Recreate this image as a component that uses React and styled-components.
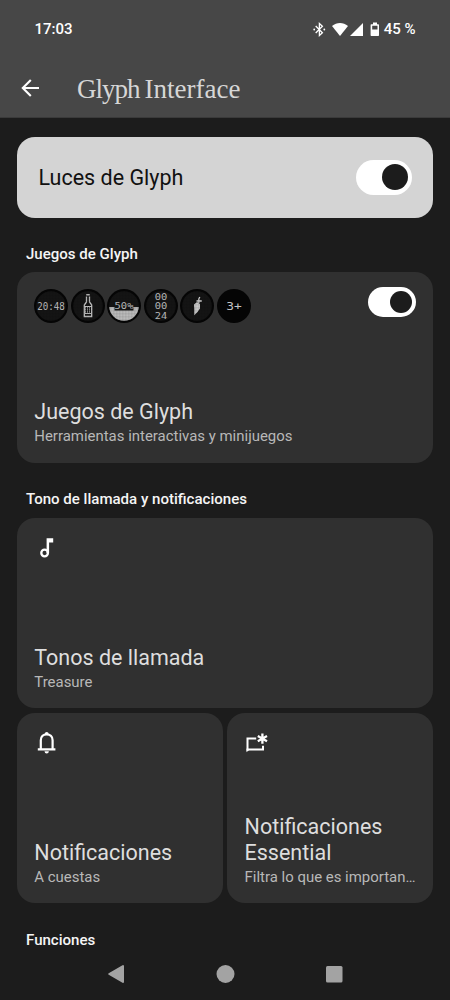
import React, { useState } from 'react'
import styled, { createGlobalStyle } from 'styled-components'

const GlobalStyle = createGlobalStyle`
    * {
        box-sizing: border-box;
    }
    body {
        margin: 0;
        background: #1c1c1c;
        font-family: Roboto, "Liberation Sans", sans-serif;
    }
    button {
        padding: 0;
        border: none;
        background: transparent;
        cursor: pointer;
    }
    svg {
        display: block;
    }
`

const Screen = styled.div`
    display: flex;
    flex-direction: column;
    width: 450px;
    height: 1000px;
    overflow: hidden;
    background: #1c1c1c;
`

const Header = styled.header`
    height: 118px;
    flex-shrink: 0;
    background: #474747;
    border-bottom: 1px solid #3a3a3a;
`

const StatusBar = styled.div`
    display: flex;
    justify-content: space-between;
    align-items: center;
    height: 58px;
    padding: 0 34.5px;
    color: #fff;
    font-size: 15px;
    font-weight: 500;
`

const StatusIcons = styled.div`
    display: flex;
    align-items: center;
`

const TitleBar = styled.div`
    display: flex;
    align-items: center;
    height: 60px;
    padding-left: 21px;
`

const Title = styled.h1`
    display: flex;
    gap: 5px;
    margin: 2px 0 0 38px;
    color: #d6d6d6;
    font-family: "Liberation Serif", serif;
    font-size: 27px;
    font-weight: 400;
    line-height: 32px;
`

const TitleWord = styled.span`
    letter-spacing: ${props => props.$spacing}px;
`

const Content = styled.main`
    flex: 1;
    padding: 19px 17px 0;
`

const MainSwitch = styled.section`
    display: flex;
    justify-content: space-between;
    align-items: center;
    height: 80.5px;
    padding: 0 21.5px 0 21.5px;
    border-radius: 18px;
    background: #d4d4d4;
    color: #111;
    font-size: 21.5px;
`

const SectionTitle = styled.h2`
    height: ${props => props.$height || 54.5}px;
    margin: 0;
    padding: 27.5px 0 0 9px;
    color: #f5f5f5;
    font-size: 15.05px;
    font-weight: 500;
    line-height: 19px;
`

const Grid = styled.div`
    display: grid;
    grid-template-columns: 1fr 1fr;
    gap: 4.5px;
`

const CardBox = styled.section`
    display: flex;
    flex-direction: column;
    justify-content: space-between;
    grid-column: ${props => (props.$wide ? 'span 2' : 'auto')};
    height: 190.5px;
    min-width: 0;
    padding: 15px 17px 17.5px 17.3px;
    border-radius: 18px;
    background: #303030;
`

const CardTop = styled.div`
    display: flex;
    justify-content: space-between;
    align-items: flex-start;
`

const CardTitle = styled.div`
    color: #dedede;
    font-size: 21.5px;
    line-height: 25.4px;
`

const CardText = styled.div`
    margin-top: 2.5px;
    color: #b8b8b8;
    font-size: 14.95px;
    line-height: 18px;
    white-space: nowrap;
`

const Track = styled.button`
    display: flex;
    align-items: center;
    justify-content: ${props => (props.$on ? 'flex-end' : 'flex-start')};
    width: ${props => (props.$small ? 48 : 56)}px;
    height: ${props => (props.$small ? 30 : 35)}px;
    padding: 0 4px;
    border-radius: 18px;
    background: ${props => (props.$on ? '#fff' : '#777')};
`

const Thumb = styled.span`
    width: ${props => (props.$small ? 22 : 26)}px;
    height: ${props => (props.$small ? 22 : 26)}px;
    border-radius: 50%;
    background: #1c1c1c;
`

const Toys = styled.div`
    display: flex;
    gap: 2.5px;
    padding-top: 2px;
    margin-left: -0.3px;
`

const NavBar = styled.nav`
    display: flex;
    justify-content: space-between;
    align-items: center;
    height: 52px;
    padding: 0 107px 0 106.5px;
`

const Toggle = ({ small, label }) => {
    const [on, setOn] = useState(true)

    return (
        <Track type="button" role="switch" aria-checked={on} aria-label={label} $small={small} $on={on} onClick={() => setOn(!on)}>
            <Thumb $small={small} />
        </Track>
    )
}

// Round dot-matrix preview, the mesh goes over the content
const Toy = ({ children, plain }) => (
    <svg width="34" height="34" viewBox="0 0 34 34">
        <defs>
            <pattern id="mesh" width="1.5" height="1.5" patternUnits="userSpaceOnUse">
                <path d="M0 0H1.5M0 0V1.5" stroke="#000" strokeWidth="0.4" />
            </pattern>
            <clipPath id="disc">
                <circle cx="17" cy="17" r="14.8" />
            </clipPath>
        </defs>
        <circle cx="17" cy="17" r="17" fill="#050505" />
        {!plain && <circle cx="17" cy="17" r="14.8" fill="#151515" />}
        {children}
        {!plain && <circle cx="17" cy="17" r="14.8" fill="url(#mesh)" opacity="0.35" />}
    </svg>
)

const ToyText = ({ y, width, size = 10, color = '#c4c4c4', children }) => (
    <text x={17 - width / 2} y={y} textLength={width} lengthAdjust="spacingAndGlyphs" fontFamily="DejaVu Sans Mono, monospace" fontSize={size} fill={color}>
        {children}
    </text>
)

const GlyphToys = () => (
    <Toys>
        <Toy>
            <ToyText y={20.5} width={27.5} size={10.5}>20:48</ToyText>
        </Toy>
        <Toy>
            <path d="M15.2 5.8H18.8" stroke="#c8c8c8" strokeWidth="1.4" />
            <path d="M15.5 7.5V13L13.3 16V27.5H20.7V16L18.5 13V7.5" fill="none" stroke="#c8c8c8" strokeWidth="1.3" />
            <path d="M13.5 17.5H20.5M13.5 24.5H20.5" stroke="#c8c8c8" strokeWidth="1.2" />
            <path d="M14 18.8H20M14 20.8H20M14 22.8H20" stroke="#bbb" strokeWidth="1.3" strokeDasharray="1 1" />
        </Toy>
        <Toy>
            <g clipPath="url(#disc)">
                <path d="M1 18H7.5V21.5H26.5V18H33V34H1Z" fill="#c0c0c0" />
            </g>
            <ToyText y={20.4} width={19} size={9}>50%</ToyText>
        </Toy>
        <Toy>
            <ToyText y={10.5} width={12.5} size={9.5}>00</ToyText>
            <ToyText y={19.8} width={12.5} size={9.5}>00</ToyText>
            <ToyText y={30} width={12.5} size={9.5}>24</ToyText>
        </Toy>
        <Toy>
            <path d="M14 15.5L17 13L20 15V19.5L17.5 23L14.3 26.2V20Z" fill="#d0d0d0" />
            <path d="M19.8 8L18.8 10V14M16.5 12H21.8" fill="none" stroke="#d8d8d8" strokeWidth="1.3" />
        </Toy>
        <Toy plain>
            <ToyText y={20.7} width={15.5} size={11}>3+</ToyText>
        </Toy>
    </Toys>
)

const BackIcon = () => (
    <svg width="18" height="18" viewBox="0 0 18 18" fill="none" stroke="#fff" strokeWidth="2.1">
        <path d="M18 9H2M9.8 1L1.8 9L9.8 17" />
    </svg>
)

const BluetoothIcon = () => (
    <svg width="13" height="15" viewBox="0 0 13 15" fill="none" stroke="#fff" strokeWidth="1.3">
        <path d="M2.7 4L9.4 10.8L6.4 13.5V1.5L9.4 4.2L2.7 11" />
        <circle cx="1.2" cy="7.5" r="0.9" fill="#fff" stroke="none" />
        <circle cx="11.3" cy="7.5" r="0.9" fill="#fff" stroke="none" />
    </svg>
)

const SignalIcons = () => (
    <svg width="48" height="15" viewBox="0 0 48 15" fill="#fff">
        <path d="M0 4.1C4.8 0.1 11.2 0.1 16 4.1L8 14Z" />
        <path d="M31 1V14H18Z" />
        <path d="M41 0.6H45V2.2H46.3Q47 2.2 47 2.9V13.3Q47 14 46.3 14H39.3Q38.6 14 38.6 13.3V2.9Q38.6 2.2 39.3 2.2H41ZM40.2 3.8V7.6H45.5V3.8Z" fillRule="evenodd" />
    </svg>
)

const NoteIcon = () => (
    <svg width="25" height="30" viewBox="0 0 25 30">
        <circle cx="10.6" cy="20" r="3.3" fill="none" stroke="#fff" strokeWidth="2.3" />
        <path d="M12.6 5.3H19.2V9.4H15.1V20H12.6Z" fill="#fff" />
    </svg>
)

const BellIcon = () => (
    <svg width="26" height="30" viewBox="0 0 26 30">
        <path d="M3.8 21.3H21.4M6.8 21V12.2C6.8 8.6 9.4 6.3 12.7 6.3S18.6 8.6 18.6 12.2V21" fill="none" stroke="#fff" strokeWidth="2.2" />
        <path d="M10.8 6.5V5.8Q10.8 4.1 12.7 4.1T14.6 5.8V6.5ZM10.5 23.3H14.9Q14.7 25.5 12.7 25.5T10.5 23.3Z" fill="#fff" />
    </svg>
)

const EssentialIcon = () => (
    <svg width="26" height="30" viewBox="0 0 26 30" fill="none" stroke="#fff">
        <path d="M11.2 10.4H2.5V22.8M1.5 21.4H18V17.8" strokeWidth="2" />
        <path d="M1.5 20.5V24.3L4.5 21.5Z" fill="#fff" stroke="none" />
        <path d="M17.4 5.6V15.8M12.8 8.1L22 13.3M22 8.1L12.8 13.3" strokeWidth="2.3" />
    </svg>
)

const Card = ({ top, title, text, wide }) => (
    <CardBox $wide={wide}>
        <CardTop>{top}</CardTop>
        <div>
            <CardTitle>{title}</CardTitle>
            <CardText>{text}</CardText>
        </div>
    </CardBox>
)

const App = () => (
    <Screen>
        <GlobalStyle />
        <Header>
            <StatusBar>
                <span>17:03</span>
                <StatusIcons>
                    <BluetoothIcon />
                    <svg width="6" height="1" />
                    <SignalIcons />
                    <span>&nbsp;45 %</span>
                </StatusIcons>
            </StatusBar>
            <TitleBar>
                <button type="button" aria-label="Atrás"><BackIcon /></button>
                <Title>
                    <TitleWord $spacing={-1}>Glyph</TitleWord>
                    <TitleWord $spacing={0}>Interface</TitleWord>
                </Title>
            </TitleBar>
        </Header>
        <Content>
            <MainSwitch>
                <span>Luces de Glyph</span>
                <Toggle label="Luces de Glyph" />
            </MainSwitch>
            <SectionTitle>Juegos de Glyph</SectionTitle>
            <Grid>
                <Card
                    wide
                    top={<><GlyphToys /><Toggle small label="Juegos de Glyph" /></>}
                    title="Juegos de Glyph"
                    text="Herramientas interactivas y minijuegos"
                />
            </Grid>
            <SectionTitle $height={55}>Tono de llamada y notificaciones</SectionTitle>
            <Grid>
                <Card wide top={<NoteIcon />} title="Tonos de llamada" text="Treasure" />
                <Card top={<BellIcon />} title="Notificaciones" text="A cuestas" />
                <Card top={<EssentialIcon />} title="Notificaciones Essential" text="Filtra lo que es importan…" />
            </Grid>
            <SectionTitle $height={45}>Funciones</SectionTitle>
        </Content>
        <NavBar>
            <svg width="18" height="20" viewBox="0 0 18 20">
                <path d="M2.2 10L16 2V18Z" fill="#a3a3a3" stroke="#a3a3a3" strokeWidth="2" strokeLinejoin="round" />
            </svg>
            <svg width="19" height="18" viewBox="0 0 19 18">
                <circle cx="9.5" cy="9" r="9" fill="#a3a3a3" />
            </svg>
            <svg width="17" height="17" viewBox="0 0 17 17">
                <rect width="16.5" height="16.5" rx="1.5" fill="#a3a3a3" />
            </svg>
        </NavBar>
    </Screen>
)

export default App
